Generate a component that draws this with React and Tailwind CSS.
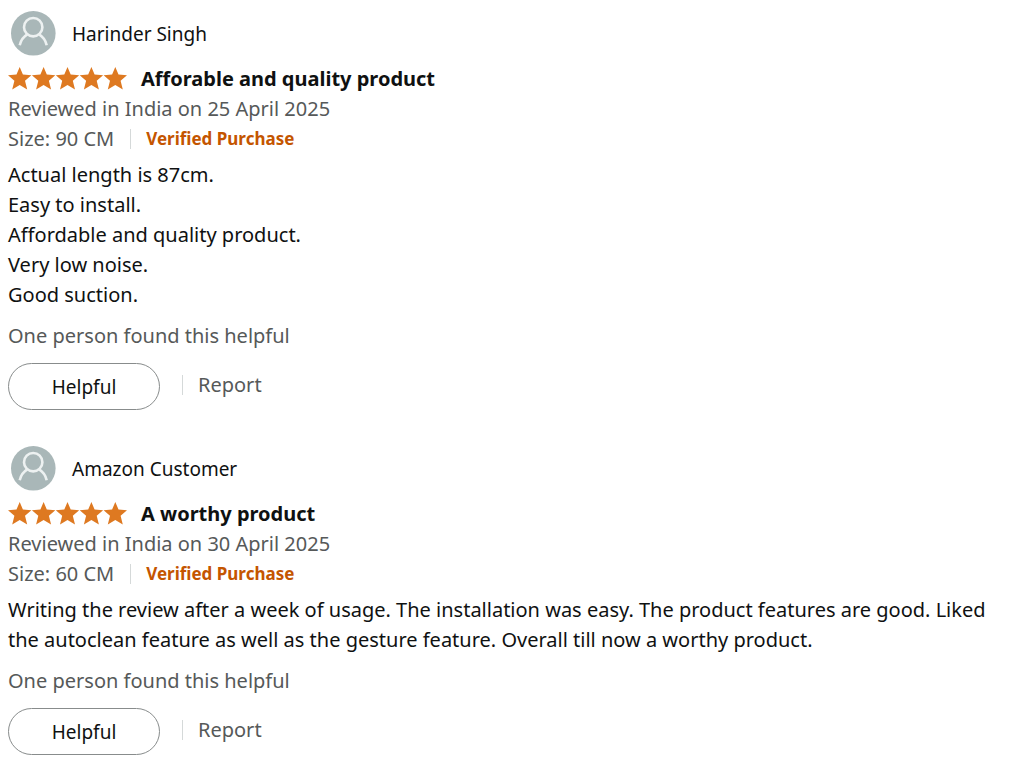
import React from 'react';

const reviews = [
  {
    id: 1,
    name: 'Harinder Singh',
    title: 'Afforable and quality product',
    date: 'Reviewed in India on 25 April 2025',
    size: '90 CM',
    body: [
      'Actual length is 87cm.',
      'Easy to install.',
      'Affordable and quality product.',
      'Very low noise.',
      'Good suction.'
    ]
  },
  {
    id: 2,
    name: 'Amazon Customer',
    title: 'A worthy product',
    date: 'Reviewed in India on 30 April 2025',
    size: '60 CM',
    body: [
      'Writing the review after a week of usage. The installation was easy. The product features are good. Liked the autoclean feature as well as the gesture feature. Overall till now a worthy product.'
    ]
  }
];

const Avatar = () => (
  <svg viewBox="0 0 45 45" className="w-[45px] h-[45px] shrink-0" aria-hidden="true">
    <circle cx="22.3" cy="22.3" r="22.3" fill="#a9b7b8" />
    <g fill="none" stroke="#edf1f1" strokeWidth="2.6">
      <circle cx="22.2" cy="16.2" r="9.2" />
      <path d="M8.700 34.300C9.700 29.700 12.200 25.900 16.300 23.400M35.700 34.300C34.700 29.700 32.200 25.900 28.100 23.400" />
    </g>
  </svg>
);

const Stars = () => (
  <svg viewBox="0 0 120 24" className="w-[120px] h-6 shrink-0" role="img" aria-label="5 out of 5 stars">
    {[0, 1, 2, 3, 4].map((i) => (
      <path
        key={i}
        transform={`translate(${i * 23.9} 0)`}
        d="M11.700 0l3.200 7.600 8.500.6-6.400 5.500 2.200 8.700-7.500-4.400-7.500 4.400 2.200-8.700L0 8.200l8.500-.6z"
        fill="#de7921"
      />
    ))}
  </svg>
);

const Review = ({ review }) => (
  <article>
    <div className="flex items-center gap-4 pl-[3px]">
      <Avatar />
      <span className="text-[19px] leading-7">{review.name}</span>
    </div>

    <div className="mt-2 flex items-center gap-[13px]">
      <Stars />
      <h3 className="text-[20px] leading-[30px] font-bold">{review.title}</h3>
    </div>
    <p className="text-[#565959]">{review.date}</p>
    <div className="flex items-center text-[#565959]">
      <span>Size: {review.size}</span>
      <span className="ml-4 mr-[15px] w-px h-5 bg-[#d5d9d9]" />
      <span className="text-[17px] font-bold text-[#c45500]">Verified Purchase</span>
    </div>

    <div className="mt-[6px]">
      {review.body.map((line) => (
        <p key={line}>{line}</p>
      ))}
    </div>

    <p className="mt-[11px] text-[#565959]">One person found this helpful</p>
    <div className="mt-3 flex items-start">
      <button
        type="button"
        className="w-[152px] h-[47px] rounded-full border border-[#888c8c] bg-white text-[19px] hover:bg-[#f7fafa] cursor-pointer"
      >
        Helpful
      </button>
      <div className="mt-[7px] ml-[22px] flex items-center gap-[15px]">
        <span className="w-px h-5 bg-[#d5d9d9]" />
        <a href="#report" className="text-[#565959] hover:underline">Report</a>
      </div>
    </div>
  </article>
);

const App = () => (
  <main className="bg-white px-2 pt-[11px] pb-2 space-y-9 font-['Noto_Sans','Open_Sans',sans-serif] text-[20px] leading-[30px] text-[#0f1111]">
    {reviews.map((review) => (
      <Review key={review.id} review={review} />
    ))}
  </main>
);

export default App;
